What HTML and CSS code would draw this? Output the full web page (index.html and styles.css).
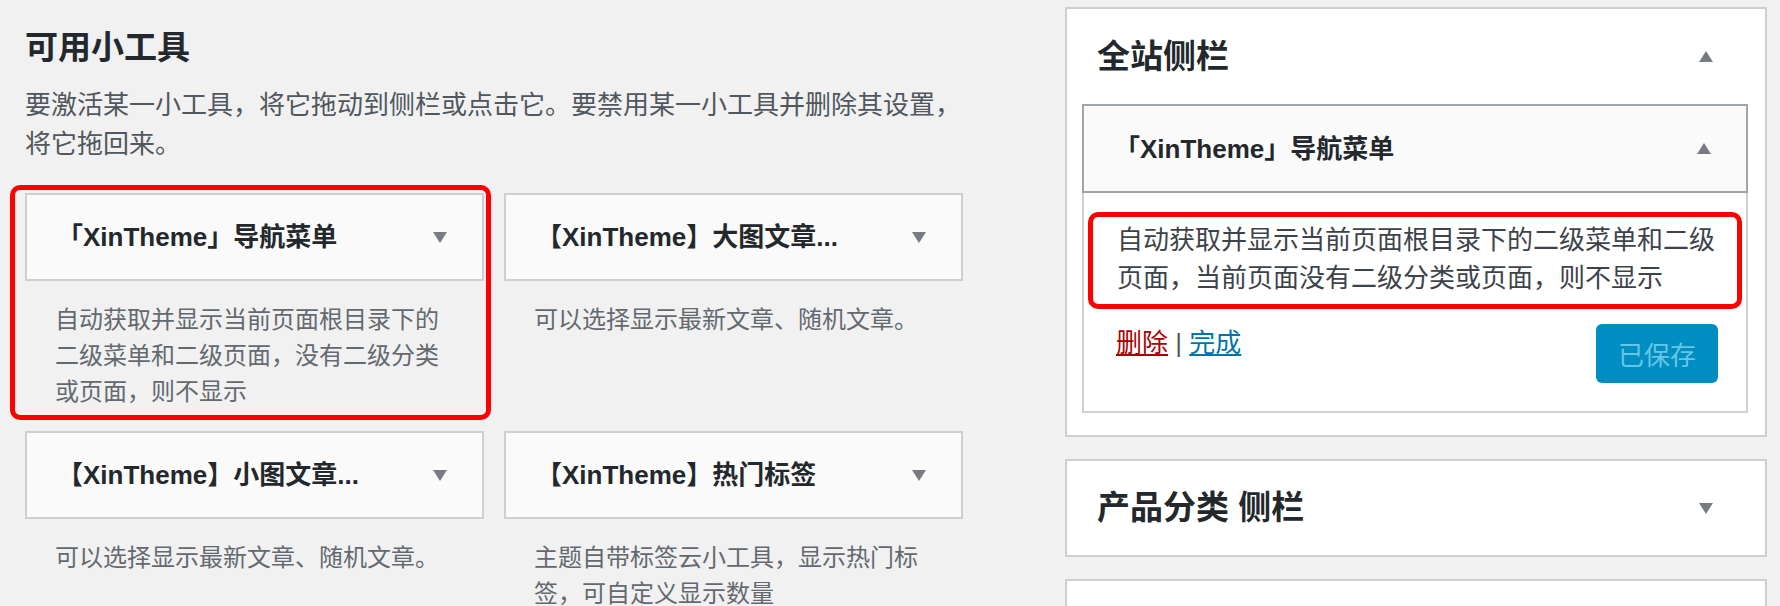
FILE: index.html
```html
<!DOCTYPE html>
<html lang="zh-CN">
<head>
  <meta charset="UTF-8">
  <title>小工具</title>
  <link rel="stylesheet" href="styles.css">
</head>
<body>
  <div class="wrap">
    <div class="available">
      <h2>可用小工具</h2>
      <p class="intro">要激活某一小工具，将它拖动到侧栏或点击它。要禁用某一小工具并删除其设置，将它拖回来。</p>

      <div class="widget-list">
        <div class="widget marked">
          <div class="widget-top">
            <h3>「XinTheme」导航菜单</h3>
            <span class="toggle"></span>
          </div>
          <div class="widget-desc">自动获取并显示当前页面根目录下的二级菜单和二级页面，没有二级分类或页面，则不显示</div>
        </div>

        <div class="widget">
          <div class="widget-top">
            <h3>【XinTheme】大图文章...</h3>
            <span class="toggle"></span>
          </div>
          <div class="widget-desc">可以选择显示最新文章、随机文章。</div>
        </div>

        <div class="widget">
          <div class="widget-top">
            <h3>【XinTheme】小图文章...</h3>
            <span class="toggle"></span>
          </div>
          <div class="widget-desc">可以选择显示最新文章、随机文章。</div>
        </div>

        <div class="widget">
          <div class="widget-top">
            <h3>【XinTheme】热门标签</h3>
            <span class="toggle"></span>
          </div>
          <div class="widget-desc">主题自带标签云小工具，显示热门标签，可自定义显示数量</div>
        </div>
      </div>
    </div>

    <div class="sidebars">
      <div class="sidebar">
        <div class="sidebar-name">
          <h2>全站侧栏</h2>
          <span class="toggle up"></span>
        </div>
        <div class="sidebar-widgets">
          <div class="widget open">
            <div class="widget-top">
              <h3>「XinTheme」导航菜单</h3>
              <span class="toggle up"></span>
            </div>
            <div class="widget-inside">
              <p class="widget-note marked">自动获取并显示当前页面根目录下的二级菜单和二级页面，当前页面没有二级分类或页面，则不显示</p>
              <div class="widget-actions">
                <div class="links"><a href="#" class="delete">删除</a> | <a href="#" class="done">完成</a></div>
                <button class="save" disabled>已保存</button>
              </div>
            </div>
          </div>
        </div>
      </div>

      <div class="sidebar">
        <div class="sidebar-name closed">
          <h2>产品分类 侧栏</h2>
          <span class="toggle"></span>
        </div>
      </div>

      <div class="sidebar">
        <div class="sidebar-name closed"></div>
      </div>
    </div>
  </div>
</body>
</html>
```

FILE: styles.css
```css
:root {
  --bg: #f1f1f1;
  --text: #23282d;
  --muted: #646970;
  --border: #ccd0d4;
  --border-dark: #a0a5aa;
  --arrow: #787c82;
  --mark: #ff0000;
}

* {
  margin: 0;
  padding: 0;
  box-sizing: border-box;
}

html {
  overflow: hidden;
}

body {
  background: var(--bg);
  color: var(--text);
  font-family: "Liberation Sans", "Noto Sans CJK SC", sans-serif;
}

.wrap {
  display: flex;
  align-items: flex-start;
  gap: 102px;
  padding: 7px 13px 0 25px;
}

/* left column */
.available {
  width: 938px;
  padding-top: 21px;
}
.available h2 {
  font-size: 33px;
  line-height: 40px;
  font-weight: 700;
}
.intro {
  margin-top: 18px;
  font-size: 26px;
  line-height: 39px;
  color: #50575e;
}

.widget-list {
  margin-top: 29px;
  display: grid;
  grid-template-columns: 459px 459px;
  column-gap: 20px;
}

.widget {
  position: relative;
}
.widget-top {
  display: flex;
  align-items: center;
  justify-content: space-between;
  height: 88px;
  padding: 0 35px 0 30px;
  background: #fafafa;
  border: 2px solid var(--border);
}
.widget-top h3 {
  font-size: 26px;
  line-height: 30px;
  font-weight: 700;
  white-space: nowrap;
}
.widget-desc {
  padding: 21px 30px;
  font-size: 24px;
  line-height: 36px;
  color: var(--muted);
}

.toggle {
  width: 0;
  height: 0;
  border-left: 7.5px solid transparent;
  border-right: 7.5px solid transparent;
  border-top: 11px solid var(--arrow);
}
.toggle.up {
  border-top: 0;
  border-bottom: 11px solid var(--arrow);
}

/* red annotation frames */
.marked::after {
  content: "";
  position: absolute;
  border: 5px solid var(--mark);
  border-radius: 10px;
}
.widget-list .marked::after {
  top: -8px;
  left: -15px;
  right: -7px;
  bottom: 11px;
}

/* right column */
.sidebars {
  width: 702px;
  display: flex;
  flex-direction: column;
  gap: 22px;
}
.sidebar {
  background: #fff;
  border: 2px solid var(--border);
}
.sidebar-name {
  display: flex;
  align-items: center;
  justify-content: space-between;
  height: 95px;
  padding: 0 52px 0 30px;
}
.sidebar-name.closed {
  height: 94px;
}
.sidebar-name h2 {
  font-size: 33px;
  line-height: 40px;
  font-weight: 700;
}

.sidebar-widgets {
  padding: 0 17px 22px 15px;
}
.open .widget-top {
  height: 89px;
  border-color: var(--border-dark);
}
.widget-inside {
  padding: 28px 28px 28px 32px;
  border: 2px solid var(--border);
  border-top: 0;
}
.widget-note {
  position: relative;
  padding-left: 1px;
  font-size: 26px;
  line-height: 38px;
  color: #3c434a;
}
.widget-note.marked::after {
  top: -9px;
  left: -28px;
  right: -24px;
  bottom: -12px;
}

.widget-actions {
  margin-top: 27px;
  display: flex;
  align-items: flex-start;
  justify-content: space-between;
}
.links {
  font-size: 26px;
  line-height: 38px;
  color: #50575e;
}
.links a {
  text-decoration: underline;
}
.delete {
  color: #a00;
}
.done {
  color: #0073aa;
}

.save {
  width: 122px;
  height: 59px;
  border: none;
  border-radius: 6px;
  background: #008ec2;
  color: #66c6e4;
  font-family: inherit;
  font-size: 26px;
}
```
